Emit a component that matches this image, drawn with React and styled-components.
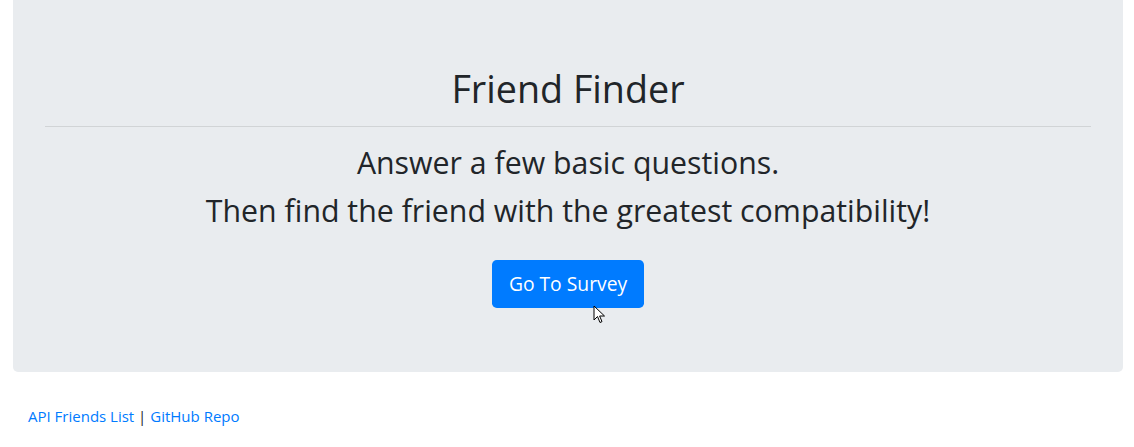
import React from 'react';
import styled, { createGlobalStyle } from 'styled-components';

const GlobalStyle = createGlobalStyle`
  body {
    margin: 0;
    background: #fff;
    font-family: "Open Sans", "Noto Sans", "Liberation Sans", sans-serif;
    color: #212529;
  }
`;

const Container = styled.div`
  width: 1110px;
  margin-left: 13px;
`;

const Jumbotron = styled.header`
  position: relative;
  margin-top: -2px;
  padding: 64px 32px;
  background: #e9ecef;
  border-radius: 0 0 5px 5px;
  text-align: center;
`;

const Title = styled.h1`
  margin: 2px 0 0;
  font-size: 37.7px;
  font-weight: 400;
  line-height: 50px;
`;

const Divider = styled.hr`
  margin: 12px 0 16px;
  border: 0;
  border-top: 1px solid rgba(0, 0, 0, 0.1);
`;

const Lead = styled.h2`
  margin: 0 0 8px;
  font-size: 30.3px;
  font-weight: 400;
  line-height: 40px;
`;

const ButtonRow = styled.div`
  margin-top: 29px;
  display: flex;
  justify-content: center;
`;

const Button = styled.a`
  display: inline-block;
  width: 152px;
  box-sizing: border-box;
  padding: 8px 0;
  font-size: 19.3px;
  line-height: 32px;
  color: #fff;
  background: #007bff;
  border-radius: 4.8px;
  text-decoration: none;
`;

const Cursor = styled.svg`
  position: absolute;
  left: 580px;
  top: 307px;
`;

const Footer = styled.footer`
  margin-top: 32px;
  padding: 0 15px;
  font-size: 15px;
  line-height: 24px;
`;

const Link = styled.a`
  color: #007bff;
  text-decoration: none;
`;

export default function App() {
  return (
    <>
      <GlobalStyle />
      <Container>
        <Jumbotron>
          <Title>Friend Finder</Title>
          <Divider />
          <Lead>Answer a few basic questions.</Lead>
          <Lead>Then find the friend with the greatest compatibility!</Lead>
          <ButtonRow>
            <Button href="#">Go To Survey</Button>
          </ButtonRow>
          <Cursor width="14" height="20" viewBox="0 0 14 20">
            <path d="M1 1 L1 15 L4.5 11.5 L7 17.5 L9 16.6 L6.6 11 L11.5 11 Z" fill="#fff" stroke="#000" strokeWidth="1" strokeLinejoin="round" />
          </Cursor>
        </Jumbotron>
        <Footer>
          <Link href="#">API Friends List</Link> | <Link href="#">GitHub Repo</Link>
        </Footer>
      </Container>
    </>
  );
}
